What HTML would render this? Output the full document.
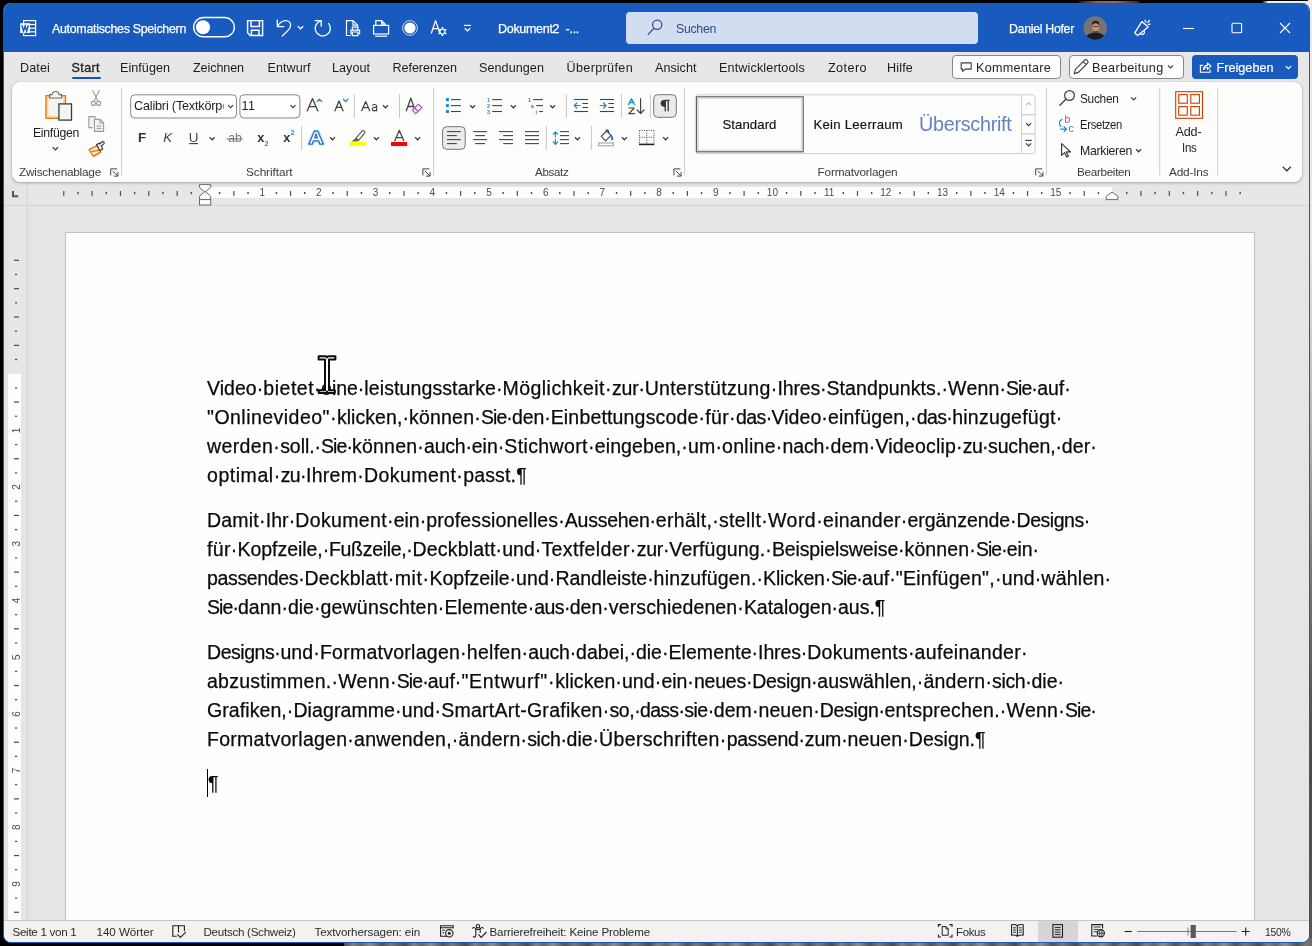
<!DOCTYPE html>
<html lang="de"><head><meta charset="utf-8"><title>Dokument2 - Word</title>
<style>
*{box-sizing:border-box}
html,body{margin:0;padding:0}
body{width:1312px;height:946px;overflow:hidden;position:relative;background:#000;font-family:"Liberation Sans",sans-serif;font-size:13.5px;color:#262626}
.abs,.t,.d,svg.i{position:absolute}
.t{white-space:nowrap;line-height:20px;height:20px;transform-origin:0 50%}
  .d{transform-origin:0 50%;-webkit-text-stroke:0.25px #0a0a0a;white-space:nowrap;line-height:30px;height:30px;font-size:19.5px;color:#0a0a0a}
/* desktop background pieces */
#bgTopA{left:1079px;top:1px;width:60px;height:3px;background:linear-gradient(90deg,#2a1a10,#8a6244 30%,#9a7050 60%,#3a2618)}
#bgTopB{left:1262px;top:1px;width:50px;height:6px;background:linear-gradient(90deg,#000,#efebe7 6px)}
#bgRight{left:1308px;top:0;width:4px;height:946px;background:linear-gradient(180deg,#efebe7 0,#e9e6e3 25%,#b9b6b3 45%,#7c7a78 60%,#4a4846 80%,#5a5654 100%)}
#bgBot{left:344px;top:938px;width:968px;height:8px;background:repeating-linear-gradient(90deg,#4d4a47 0,#86817b 9px,#6a625a 17px,#938d86 26px,#55514d 38px,#7e776f 47px,#4d4a47 61px)}
/* window */
#win{left:3px;top:3px;width:1307px;height:940px;border-radius:8px;background:#e8e7e7;overflow:hidden;border:1px solid #185abd;border-top:none}
#title{left:0;top:0;width:1307px;height:49px;background:#185abd}
#search{left:622px;top:9px;width:352px;height:32px;border-radius:4px;background:#d2ddf2}
#tabs{left:0;top:49px;width:1307px;height:131px;background:#e8e7e7}
#startul{left:67.5px;top:74px;width:29px;height:2px;background:#1a4fb4;border-radius:1px}
.btn{border:1px solid #8a8886;border-radius:4px;background:#fdfdfd}
#bKom{left:948px;top:52px;width:109px;height:24px}
#bBea{left:1065px;top:52px;width:115px;height:24px}
#bFre{left:1188px;top:52px;width:105.5px;height:24px;border-radius:4px;background:#185abd}
#ribbon{left:8px;top:79px;width:1290px;height:100px;border-radius:8px;background:#fdfdfc;box-shadow:0 1px 3px rgba(0,0,0,.28),0 0 1px rgba(0,0,0,.18)}
.gs{width:1px;background:#d2d0ce;top:88px;height:86px}
.ss{width:1px;background:#c8c6c4}
.box{border:1px solid #8a8886;border-radius:4px;background:#fff}
.pressed{border:1px solid #8a8886;border-radius:4px;background:#e6e6e6}
/* rulers + doc area */
#docarea{left:0;top:180px;width:1307px;height:738px;background:#e5e5e5}
#hrgray{left:23px;top:183px;width:1283px;height:16px;background:#e7e7e7}
#hrwhite{left:202px;top:183.5px;width:906px;height:11.5px;background:#fefefe}
#hrline{left:0;top:202px;width:1307px;height:1px;background:#d4d4d4}
#vrline{left:23px;top:179px;width:1px;height:739px;background:#d6d6d6}
#vrgray{left:4px;top:203px;width:13px;height:715px;background:#e7e7e7}
#vrwhite{left:4px;top:371px;width:13px;height:547px;background:#fefefe}
#page{left:61px;top:229px;width:1190px;height:700px;background:#fefefd;border:1px solid #c4c2c1}
#status{left:0;top:917px;width:1307px;height:22px;background:#f3f2f1;border-top:1px solid #c9c7c6}
#selview{left:1034px;top:918px;width:40px;height:21px;background:#d8d6d5}
#caret{left:207px;top:769px;width:1px;height:28px;background:#000}
</style></head>
<body>
<div class="abs" id="bgTopA"></div><div class="abs" id="bgTopB"></div><div class="abs" id="bgRight"></div><div class="abs" id="bgBot"></div>
<div class="abs" id="win">
  <div class="abs" id="title"></div>
  <div class="abs" id="search"></div>
  <div class="abs" id="tabs"></div>
  <div class="abs" id="startul"></div>
  <div class="abs btn" id="bKom"></div><div class="abs btn" id="bBea"></div><div class="abs" id="bFre"></div>
  <div class="abs" id="docarea"></div>
  <div class="abs" id="hrgray"></div><div class="abs" id="hrwhite"></div><div class="abs" id="hrline"></div>
  <div class="abs" id="vrline"></div><div class="abs" id="vrgray"></div><div class="abs" id="vrwhite"></div>
  <div class="abs" id="page"></div>
  <div class="abs" id="ribbon"></div>
  <div class="abs" id="status"></div>
  <div class="abs" id="selview"></div>
</div>
<!-- everything below is positioned in page coordinates -->
<div class="abs" id="overlay" style="left:0;top:0;width:1312px;height:946px;overflow:hidden;will-change:transform">
<svg class="i" style="left:0;top:0" width="1312" height="946" viewBox="0 0 1312 946">
<rect x="190.63" y="191.90" width="1.40" height="2.20" rx="0" fill="#4a4a4a" stroke="none" stroke-width="0"/>
<rect x="176.55" y="191.00" width="1.20" height="4.80" rx="0" fill="#4a4a4a" stroke="none" stroke-width="0"/>
<rect x="162.28" y="191.90" width="1.40" height="2.20" rx="0" fill="#4a4a4a" stroke="none" stroke-width="0"/>
<rect x="148.21" y="191.00" width="1.20" height="4.80" rx="0" fill="#4a4a4a" stroke="none" stroke-width="0"/>
<rect x="133.93" y="191.90" width="1.40" height="2.20" rx="0" fill="#4a4a4a" stroke="none" stroke-width="0"/>
<rect x="119.86" y="191.00" width="1.20" height="4.80" rx="0" fill="#4a4a4a" stroke="none" stroke-width="0"/>
<rect x="105.59" y="191.90" width="1.40" height="2.20" rx="0" fill="#4a4a4a" stroke="none" stroke-width="0"/>
<rect x="91.51" y="191.00" width="1.20" height="4.80" rx="0" fill="#4a4a4a" stroke="none" stroke-width="0"/>
<rect x="77.24" y="191.90" width="1.40" height="2.20" rx="0" fill="#4a4a4a" stroke="none" stroke-width="0"/>
<rect x="63.17" y="191.00" width="1.20" height="4.80" rx="0" fill="#4a4a4a" stroke="none" stroke-width="0"/>
<rect x="218.97" y="191.90" width="1.40" height="2.20" rx="0" fill="#4a4a4a" stroke="none" stroke-width="0"/>
<rect x="233.25" y="191.00" width="1.20" height="4.80" rx="0" fill="#4a4a4a" stroke="none" stroke-width="0"/>
<rect x="247.32" y="191.90" width="1.40" height="2.20" rx="0" fill="#4a4a4a" stroke="none" stroke-width="0"/>
<rect x="275.67" y="191.90" width="1.40" height="2.20" rx="0" fill="#4a4a4a" stroke="none" stroke-width="0"/>
<rect x="289.94" y="191.00" width="1.20" height="4.80" rx="0" fill="#4a4a4a" stroke="none" stroke-width="0"/>
<rect x="304.01" y="191.90" width="1.40" height="2.20" rx="0" fill="#4a4a4a" stroke="none" stroke-width="0"/>
<rect x="332.36" y="191.90" width="1.40" height="2.20" rx="0" fill="#4a4a4a" stroke="none" stroke-width="0"/>
<rect x="346.63" y="191.00" width="1.20" height="4.80" rx="0" fill="#4a4a4a" stroke="none" stroke-width="0"/>
<rect x="360.71" y="191.90" width="1.40" height="2.20" rx="0" fill="#4a4a4a" stroke="none" stroke-width="0"/>
<rect x="389.05" y="191.90" width="1.40" height="2.20" rx="0" fill="#4a4a4a" stroke="none" stroke-width="0"/>
<rect x="403.33" y="191.00" width="1.20" height="4.80" rx="0" fill="#4a4a4a" stroke="none" stroke-width="0"/>
<rect x="417.40" y="191.90" width="1.40" height="2.20" rx="0" fill="#4a4a4a" stroke="none" stroke-width="0"/>
<rect x="445.75" y="191.90" width="1.40" height="2.20" rx="0" fill="#4a4a4a" stroke="none" stroke-width="0"/>
<rect x="460.02" y="191.00" width="1.20" height="4.80" rx="0" fill="#4a4a4a" stroke="none" stroke-width="0"/>
<rect x="474.09" y="191.90" width="1.40" height="2.20" rx="0" fill="#4a4a4a" stroke="none" stroke-width="0"/>
<rect x="502.44" y="191.90" width="1.40" height="2.20" rx="0" fill="#4a4a4a" stroke="none" stroke-width="0"/>
<rect x="516.71" y="191.00" width="1.20" height="4.80" rx="0" fill="#4a4a4a" stroke="none" stroke-width="0"/>
<rect x="530.78" y="191.90" width="1.40" height="2.20" rx="0" fill="#4a4a4a" stroke="none" stroke-width="0"/>
<rect x="559.13" y="191.90" width="1.40" height="2.20" rx="0" fill="#4a4a4a" stroke="none" stroke-width="0"/>
<rect x="573.40" y="191.00" width="1.20" height="4.80" rx="0" fill="#4a4a4a" stroke="none" stroke-width="0"/>
<rect x="587.48" y="191.90" width="1.40" height="2.20" rx="0" fill="#4a4a4a" stroke="none" stroke-width="0"/>
<rect x="615.82" y="191.90" width="1.40" height="2.20" rx="0" fill="#4a4a4a" stroke="none" stroke-width="0"/>
<rect x="630.10" y="191.00" width="1.20" height="4.80" rx="0" fill="#4a4a4a" stroke="none" stroke-width="0"/>
<rect x="644.17" y="191.90" width="1.40" height="2.20" rx="0" fill="#4a4a4a" stroke="none" stroke-width="0"/>
<rect x="672.52" y="191.90" width="1.40" height="2.20" rx="0" fill="#4a4a4a" stroke="none" stroke-width="0"/>
<rect x="686.79" y="191.00" width="1.20" height="4.80" rx="0" fill="#4a4a4a" stroke="none" stroke-width="0"/>
<rect x="700.86" y="191.90" width="1.40" height="2.20" rx="0" fill="#4a4a4a" stroke="none" stroke-width="0"/>
<rect x="729.21" y="191.90" width="1.40" height="2.20" rx="0" fill="#4a4a4a" stroke="none" stroke-width="0"/>
<rect x="743.48" y="191.00" width="1.20" height="4.80" rx="0" fill="#4a4a4a" stroke="none" stroke-width="0"/>
<rect x="757.56" y="191.90" width="1.40" height="2.20" rx="0" fill="#4a4a4a" stroke="none" stroke-width="0"/>
<rect x="785.90" y="191.90" width="1.40" height="2.20" rx="0" fill="#4a4a4a" stroke="none" stroke-width="0"/>
<rect x="800.18" y="191.00" width="1.20" height="4.80" rx="0" fill="#4a4a4a" stroke="none" stroke-width="0"/>
<rect x="814.25" y="191.90" width="1.40" height="2.20" rx="0" fill="#4a4a4a" stroke="none" stroke-width="0"/>
<rect x="842.60" y="191.90" width="1.40" height="2.20" rx="0" fill="#4a4a4a" stroke="none" stroke-width="0"/>
<rect x="856.87" y="191.00" width="1.20" height="4.80" rx="0" fill="#4a4a4a" stroke="none" stroke-width="0"/>
<rect x="870.94" y="191.90" width="1.40" height="2.20" rx="0" fill="#4a4a4a" stroke="none" stroke-width="0"/>
<rect x="899.29" y="191.90" width="1.40" height="2.20" rx="0" fill="#4a4a4a" stroke="none" stroke-width="0"/>
<rect x="913.56" y="191.00" width="1.20" height="4.80" rx="0" fill="#4a4a4a" stroke="none" stroke-width="0"/>
<rect x="927.64" y="191.90" width="1.40" height="2.20" rx="0" fill="#4a4a4a" stroke="none" stroke-width="0"/>
<rect x="955.98" y="191.90" width="1.40" height="2.20" rx="0" fill="#4a4a4a" stroke="none" stroke-width="0"/>
<rect x="970.26" y="191.00" width="1.20" height="4.80" rx="0" fill="#4a4a4a" stroke="none" stroke-width="0"/>
<rect x="984.33" y="191.90" width="1.40" height="2.20" rx="0" fill="#4a4a4a" stroke="none" stroke-width="0"/>
<rect x="1012.68" y="191.90" width="1.40" height="2.20" rx="0" fill="#4a4a4a" stroke="none" stroke-width="0"/>
<rect x="1026.95" y="191.00" width="1.20" height="4.80" rx="0" fill="#4a4a4a" stroke="none" stroke-width="0"/>
<rect x="1041.02" y="191.90" width="1.40" height="2.20" rx="0" fill="#4a4a4a" stroke="none" stroke-width="0"/>
<rect x="1069.37" y="191.90" width="1.40" height="2.20" rx="0" fill="#4a4a4a" stroke="none" stroke-width="0"/>
<rect x="1083.64" y="191.00" width="1.20" height="4.80" rx="0" fill="#4a4a4a" stroke="none" stroke-width="0"/>
<rect x="1097.71" y="191.90" width="1.40" height="2.20" rx="0" fill="#4a4a4a" stroke="none" stroke-width="0"/>
<rect x="1126.06" y="191.90" width="1.40" height="2.20" rx="0" fill="#4a4a4a" stroke="none" stroke-width="0"/>
<rect x="1140.33" y="191.00" width="1.20" height="4.80" rx="0" fill="#4a4a4a" stroke="none" stroke-width="0"/>
<rect x="1154.41" y="191.90" width="1.40" height="2.20" rx="0" fill="#4a4a4a" stroke="none" stroke-width="0"/>
<rect x="1168.68" y="191.00" width="1.20" height="4.80" rx="0" fill="#4a4a4a" stroke="none" stroke-width="0"/>
<rect x="1182.75" y="191.90" width="1.40" height="2.20" rx="0" fill="#4a4a4a" stroke="none" stroke-width="0"/>
<rect x="1197.03" y="191.00" width="1.20" height="4.80" rx="0" fill="#4a4a4a" stroke="none" stroke-width="0"/>
<rect x="1211.10" y="191.90" width="1.40" height="2.20" rx="0" fill="#4a4a4a" stroke="none" stroke-width="0"/>
<rect x="1225.37" y="191.00" width="1.20" height="4.80" rx="0" fill="#4a4a4a" stroke="none" stroke-width="0"/>
<rect x="1239.45" y="191.90" width="1.40" height="2.20" rx="0" fill="#4a4a4a" stroke="none" stroke-width="0"/>
<g font-family="Liberation Sans, sans-serif" font-size="10" fill="#4a4a4a" text-anchor="middle"><text x="262.19" y="196.1">1</text><text x="318.89" y="196.1">2</text><text x="375.58" y="196.1">3</text><text x="432.27" y="196.1">4</text><text x="488.96" y="196.1">5</text><text x="545.66" y="196.1">6</text><text x="602.35" y="196.1">7</text><text x="659.04" y="196.1">8</text><text x="715.74" y="196.1">9</text><text x="772.43" y="196.1">10</text><text x="829.12" y="196.1">11</text><text x="885.82" y="196.1">12</text><text x="942.51" y="196.1">13</text><text x="999.20" y="196.1">14</text><text x="1055.89" y="196.1">15</text></g>
<rect x="15.00" y="358.93" width="2.20" height="1.20" rx="0" fill="#4a4a4a" stroke="none" stroke-width="0"/>
<rect x="14.00" y="344.75" width="5.00" height="1.20" rx="0" fill="#4a4a4a" stroke="none" stroke-width="0"/>
<rect x="15.00" y="330.58" width="2.20" height="1.20" rx="0" fill="#4a4a4a" stroke="none" stroke-width="0"/>
<rect x="14.00" y="316.41" width="5.00" height="1.20" rx="0" fill="#4a4a4a" stroke="none" stroke-width="0"/>
<rect x="15.00" y="302.23" width="2.20" height="1.20" rx="0" fill="#4a4a4a" stroke="none" stroke-width="0"/>
<rect x="14.00" y="288.06" width="5.00" height="1.20" rx="0" fill="#4a4a4a" stroke="none" stroke-width="0"/>
<rect x="15.00" y="273.89" width="2.20" height="1.20" rx="0" fill="#4a4a4a" stroke="none" stroke-width="0"/>
<rect x="14.00" y="259.71" width="5.00" height="1.20" rx="0" fill="#4a4a4a" stroke="none" stroke-width="0"/>
<rect x="15.00" y="387.27" width="2.20" height="1.20" rx="0" fill="#4a4a4a" stroke="none" stroke-width="0"/>
<rect x="14.00" y="401.45" width="5.00" height="1.20" rx="0" fill="#4a4a4a" stroke="none" stroke-width="0"/>
<rect x="15.00" y="415.62" width="2.20" height="1.20" rx="0" fill="#4a4a4a" stroke="none" stroke-width="0"/>
<rect x="15.00" y="443.97" width="2.20" height="1.20" rx="0" fill="#4a4a4a" stroke="none" stroke-width="0"/>
<rect x="14.00" y="458.14" width="5.00" height="1.20" rx="0" fill="#4a4a4a" stroke="none" stroke-width="0"/>
<rect x="15.00" y="472.31" width="2.20" height="1.20" rx="0" fill="#4a4a4a" stroke="none" stroke-width="0"/>
<rect x="15.00" y="500.66" width="2.20" height="1.20" rx="0" fill="#4a4a4a" stroke="none" stroke-width="0"/>
<rect x="14.00" y="514.83" width="5.00" height="1.20" rx="0" fill="#4a4a4a" stroke="none" stroke-width="0"/>
<rect x="15.00" y="529.01" width="2.20" height="1.20" rx="0" fill="#4a4a4a" stroke="none" stroke-width="0"/>
<rect x="15.00" y="557.35" width="2.20" height="1.20" rx="0" fill="#4a4a4a" stroke="none" stroke-width="0"/>
<rect x="14.00" y="571.53" width="5.00" height="1.20" rx="0" fill="#4a4a4a" stroke="none" stroke-width="0"/>
<rect x="15.00" y="585.70" width="2.20" height="1.20" rx="0" fill="#4a4a4a" stroke="none" stroke-width="0"/>
<rect x="15.00" y="614.05" width="2.20" height="1.20" rx="0" fill="#4a4a4a" stroke="none" stroke-width="0"/>
<rect x="14.00" y="628.22" width="5.00" height="1.20" rx="0" fill="#4a4a4a" stroke="none" stroke-width="0"/>
<rect x="15.00" y="642.39" width="2.20" height="1.20" rx="0" fill="#4a4a4a" stroke="none" stroke-width="0"/>
<rect x="15.00" y="670.74" width="2.20" height="1.20" rx="0" fill="#4a4a4a" stroke="none" stroke-width="0"/>
<rect x="14.00" y="684.91" width="5.00" height="1.20" rx="0" fill="#4a4a4a" stroke="none" stroke-width="0"/>
<rect x="15.00" y="699.08" width="2.20" height="1.20" rx="0" fill="#4a4a4a" stroke="none" stroke-width="0"/>
<rect x="15.00" y="727.43" width="2.20" height="1.20" rx="0" fill="#4a4a4a" stroke="none" stroke-width="0"/>
<rect x="14.00" y="741.60" width="5.00" height="1.20" rx="0" fill="#4a4a4a" stroke="none" stroke-width="0"/>
<rect x="15.00" y="755.78" width="2.20" height="1.20" rx="0" fill="#4a4a4a" stroke="none" stroke-width="0"/>
<rect x="15.00" y="784.12" width="2.20" height="1.20" rx="0" fill="#4a4a4a" stroke="none" stroke-width="0"/>
<rect x="14.00" y="798.30" width="5.00" height="1.20" rx="0" fill="#4a4a4a" stroke="none" stroke-width="0"/>
<rect x="15.00" y="812.47" width="2.20" height="1.20" rx="0" fill="#4a4a4a" stroke="none" stroke-width="0"/>
<rect x="15.00" y="840.82" width="2.20" height="1.20" rx="0" fill="#4a4a4a" stroke="none" stroke-width="0"/>
<rect x="14.00" y="854.99" width="5.00" height="1.20" rx="0" fill="#4a4a4a" stroke="none" stroke-width="0"/>
<rect x="15.00" y="869.16" width="2.20" height="1.20" rx="0" fill="#4a4a4a" stroke="none" stroke-width="0"/>
<rect x="15.00" y="897.51" width="2.20" height="1.20" rx="0" fill="#4a4a4a" stroke="none" stroke-width="0"/>
<rect x="14.00" y="911.68" width="5.00" height="1.20" rx="0" fill="#4a4a4a" stroke="none" stroke-width="0"/>
<g font-family="Liberation Sans, sans-serif" font-size="10" fill="#4a4a4a" text-anchor="middle"><text transform="translate(19.6 430.39) rotate(-90)">1</text><text transform="translate(19.6 487.09) rotate(-90)">2</text><text transform="translate(19.6 543.78) rotate(-90)">3</text><text transform="translate(19.6 600.47) rotate(-90)">4</text><text transform="translate(19.6 657.16) rotate(-90)">5</text><text transform="translate(19.6 713.86) rotate(-90)">6</text><text transform="translate(19.6 770.55) rotate(-90)">7</text><text transform="translate(19.6 827.24) rotate(-90)">8</text><text transform="translate(19.6 883.94) rotate(-90)">9</text></g>
<path d="M13 191V196.2H18.2" fill="none" stroke="#555" stroke-width="2" />
<path d="M199.5 184.6H210.7V187.4L205.1 192.2L199.5 187.4Z" fill="#fff" stroke="#6b6b6b" stroke-width="1" />
<path d="M205.1 191.4L210.7 196.2V199.6H199.5V196.2Z" fill="#fff" stroke="#6b6b6b" stroke-width="1" />
<rect x="199.50" y="199.60" width="11.20" height="5.40" rx="0" fill="#fff" stroke="#6b6b6b" stroke-width="1"/>
<path d="M1112 192.2L1117.8 196.2V199.6H1106.2V196.2Z" fill="#fff" stroke="#6b6b6b" stroke-width="1" />
</svg>
<svg class="i" style="left:0;top:0" width="1312" height="946" viewBox="0 0 1312 946">
<rect x="23.60" y="20.60" width="12.00" height="15.00" rx="0" fill="none" stroke="#fff" stroke-width="1.2"/>
<path d="M30.00 24.50L35.00 24.50" stroke="#fff" stroke-width="1.2" stroke-linecap="butt" fill="none"/><path d="M30.00 28.20L35.00 28.20" stroke="#fff" stroke-width="1.2" stroke-linecap="butt" fill="none"/><path d="M30.00 31.80L35.00 31.80" stroke="#fff" stroke-width="1.2" stroke-linecap="butt" fill="none"/>
<rect x="20.20" y="23.20" width="9.80" height="9.80" rx="0" fill="#fff" stroke="none" stroke-width="0"/>
<path d="M21.9 25.3L23.5 31L25.1 26.2L26.7 31L28.3 25.3" fill="none" stroke="#185abd" stroke-width="1.5" stroke-linejoin="miter"/>
<rect x="193.60" y="17.60" width="40.80" height="19.20" rx="9.6" fill="none" stroke="#fff" stroke-width="1.5"/>
<circle cx="203.00" cy="27.20" r="7.00" fill="#fff" stroke="none" stroke-width="0"/>
<path d="M247.6 20.6H262.6V35.4H250.2L247.6 32.8Z M251 20.6V26.4H259.4V20.6 M251.4 35.4V30.2H259V35.4" fill="none" stroke="#fff" stroke-width="1.45" stroke-linejoin="miter"/>
<path d="M277.3 20.2V26.6H283.8 M277.6 26.3C279.5 22.8 282.5 20.6 285.8 20.6C288.8 20.6 290.6 22.8 290.6 25.2C290.6 27.4 289.5 28.9 288 30.4L282.3 36" fill="none" stroke="#fff" stroke-width="1.3" stroke-linecap="round" stroke-linejoin="round"/>
<path d="M297.80 26.23L300.50 28.77L303.20 26.23" fill="none" stroke="#fff" stroke-width="1.3" stroke-linecap="butt" stroke-linejoin="miter"/>
<path d="M315.2 20.6H321.2V26.2" fill="none" stroke="#fff" stroke-width="1.3" stroke-linecap="round" stroke-linejoin="round"/>
<path d="M321 20.9A7.6 7.6 0 1 0 328.6 23.4" fill="none" stroke="#fff" stroke-width="1.3" stroke-linecap="round"/>
<path d="M350.6 35.5H346.5V20.6H353L357.6 25.2V27.2 M353 20.6V25.2H357.6" fill="none" stroke="#fff" stroke-width="1.2" stroke-linejoin="miter"/>
<path d="M352.4 30.2V27.2H357.8V30.2 M350.8 33.6V30.2H359.6V33.6H357.8 M352.4 33.6H350.8 M352.4 32V35.6H357.8V32Z" fill="none" stroke="#fff" stroke-width="1.2" />
<rect x="373.60" y="25.40" width="15.00" height="8.60" rx="0" fill="none" stroke="#fff" stroke-width="1.2"/>
<path d="M375.8 25V20.6H381.6L385.2 24.2V25 M381.6 20.6V24.2H385.2" fill="none" stroke="#fff" stroke-width="1.2" />
<path d="M375.20 36.20L387.20 36.20" stroke="#fff" stroke-width="1.2" stroke-linecap="butt" fill="none"/>
<circle cx="410.00" cy="28.00" r="5.60" fill="#fff" stroke="none" stroke-width="0"/><circle cx="410.00" cy="28.00" r="7.40" fill="none" stroke="rgba(255,255,255,.85)" stroke-width="0.9"/>
<path d="M431.4 33L435.6 20.6L439.8 33 M432.9 28.6H438.3" fill="none" stroke="#fff" stroke-width="1.25" stroke-linejoin="round" stroke-linecap="round"/>
<circle cx="442.40" cy="31.60" r="2.50" fill="none" stroke="#fff" stroke-width="1.2"/>
<path d="M442.4 27.1V28.6 M442.4 34.6V36.1 M438.5 29.35L439.8 30.1 M445 33.1L446.3 33.85 M438.5 33.85L439.8 33.1 M445 30.1L446.3 29.35" fill="none" stroke="#fff" stroke-width="1.6" />
<path d="M464.00 25.40L471.00 25.40" stroke="#fff" stroke-width="1.2" stroke-linecap="butt" fill="none"/><path d="M464.80 28.33L467.50 30.88L470.20 28.33" fill="none" stroke="#fff" stroke-width="1.3" stroke-linecap="butt" stroke-linejoin="miter"/>
<circle cx="657.20" cy="24.80" r="4.60" fill="none" stroke="#2a4b8d" stroke-width="1.2"/><path d="M653.80 28.40L648.20 34.40" stroke="#2a4b8d" stroke-width="1.3" stroke-linecap="round" fill="none"/>
<defs><clipPath id="av"><circle cx="1095.2" cy="28" r="11.8"/></clipPath></defs>
<g clip-path="url(#av)"><rect x="1083" y="16" width="25" height="25" fill="#767472"/><path d="M1084 41C1085 35 1090 32.5 1095.5 32.5C1101 32.5 1105.5 35 1107 41Z" fill="#1d1c1c"/><ellipse cx="1095.6" cy="27.2" rx="3.6" ry="4.6" fill="#c98f6e"/><path d="M1091.8 26C1091.6 22.6 1093.2 20.8 1095.6 20.8C1098.2 20.8 1099.8 22.6 1099.4 26C1098.8 24 1097.6 23.2 1095.6 23.2C1093.6 23.2 1092.4 24 1091.8 26Z" fill="#2a1d18"/><path d="M1093.2 30.2C1094 31.6 1097.2 31.6 1098 30.2L1097.4 32.4H1093.8Z" fill="#5a3a2c"/><rect x="1092.6" y="26" width="6" height="1" fill="#3a2a24" opacity=".7"/></g>
<path d="M1141.8 21.6L1148.2 27L1137.6 35.6L1134.8 32.8Z M1140.4 33.6A2.1 2.1 0 0 0 1144 30.8" fill="none" stroke="#fff" stroke-width="1.3" stroke-linejoin="round"/>
<path d="M1145 20.2L1145.8 22.1 M1147.8 22.5L1149.6 20.3 M1148.2 24.5L1150 24.2" fill="none" stroke="#fff" stroke-width="1.2" stroke-linecap="round"/>
<path d="M1183.00 28.50L1194.00 28.50" stroke="#fff" stroke-width="1.1" stroke-linecap="butt" fill="none"/>
<rect x="1232.00" y="23.20" width="9.60" height="9.60" rx="1" fill="none" stroke="#fff" stroke-width="1.1"/>
<path d="M1280 23L1290 33M1290 23L1280 33" fill="none" stroke="#fff" stroke-width="1.1" />
<path d="M961.2 62.9H971.2V69.1H965.2L962.6 71.3V69.1H961.2Z" fill="none" stroke="#3b3b3b" stroke-width="1.1" stroke-linejoin="round"/>
<path d="M1074.2 73.6L1075.4 69.4L1084.6 60.2A1.7 1.7 0 0 1 1087 60.2L1087.6 60.8A1.7 1.7 0 0 1 1087.6 63.2L1078.4 72.4Z M1083.2 61.6L1086.2 64.6" fill="none" stroke="#3b3b3b" stroke-width="1.1" stroke-linejoin="round"/>
<path d="M1167.98 65.32L1170.50 67.88L1173.02 65.32" fill="none" stroke="#3b3b3b" stroke-width="1.2" stroke-linecap="butt" stroke-linejoin="miter"/>
<path d="M1203 65.4H1200.4V72.2H1210.2V69.6" fill="none" stroke="#fff" stroke-width="1.1" stroke-linejoin="round"/>
<path d="M1203.4 69.6C1203.6 66.8 1205.2 65.4 1207.4 65.4V63L1211 66.2L1207.4 69.4V67.2C1205.8 67.2 1204.6 67.8 1203.4 69.6Z" fill="none" stroke="#fff" stroke-width="1.1" stroke-linejoin="round"/>
<path d="M1285.80 66.12L1288.50 68.68L1291.20 66.12" fill="none" stroke="#fff" stroke-width="1.3" stroke-linecap="butt" stroke-linejoin="miter"/>
<rect x="45.90" y="95.70" width="19.60" height="22.60" rx="0" fill="#fbd9a0" stroke="#e8760a" stroke-width="1.3"/>
<rect x="48.40" y="98.20" width="14.60" height="17.60" rx="0" fill="#f4f4f7" stroke="none" stroke-width="0"/>
<path d="M49.6 98V94.6H52.2C52.2 90.4 59 90.4 59 94.6H61.6V98Z" fill="#f7f7f7" stroke="#6a6a6a" stroke-width="1.1" stroke-linejoin="round"/>
<rect x="58.90" y="103.90" width="12.60" height="16.20" rx="0" fill="#f5f5f8" stroke="#3d3d3d" stroke-width="1.3"/>
<path d="M52.70 147.32L55.40 149.88L58.10 147.32" fill="none" stroke="#3b3b3b" stroke-width="1.3" stroke-linecap="butt" stroke-linejoin="miter"/>
<path d="M92.8 90.6L97.6 100.6 M99.2 90.6L94.4 100.6" fill="none" stroke="#9b9b9b" stroke-width="1.1" stroke-linecap="round"/>
<circle cx="93.40" cy="103.40" r="2.00" fill="none" stroke="#9b9b9b" stroke-width="1.1"/><circle cx="98.60" cy="103.40" r="2.00" fill="none" stroke="#9b9b9b" stroke-width="1.1"/>
<path d="M94.4 100.6L94 101.6 M97.6 100.6L98 101.6" fill="none" stroke="#9b9b9b" stroke-width="1.1" />
<path d="M92.6 127.6H88.8V116.6H94.6L96 118" fill="#f3f3f3" stroke="#9b9b9b" stroke-width="1.1" stroke-linejoin="round"/>
<path d="M94.4 119.4H100L103.6 123V131.4H94.4Z M100 119.4V123H103.6" fill="#f3f3f3" stroke="#9b9b9b" stroke-width="1.1" stroke-linejoin="round"/>
<path d="M96.60 126.00L101.40 126.00" stroke="#9b9b9b" stroke-width="1" stroke-linecap="butt" fill="none"/><path d="M96.60 128.40L101.40 128.40" stroke="#9b9b9b" stroke-width="1" stroke-linecap="butt" fill="none"/>
<path d="M89 149.6L97.4 145.4L101 152.2L93.4 156.4Z" fill="#fbe3c4" stroke="#e8760a" stroke-width="1.2" stroke-linejoin="round"/>
<path d="M91.4 151.6L99.6 150.2 M93.4 156.2L99 152.6" fill="none" stroke="#e8760a" stroke-width="1.1" />
<path d="M96.6 144.6L99.6 143L102.8 149L99.8 150.6Z" fill="#fdfdfd" stroke="#3d3d3d" stroke-width="1.2" stroke-linejoin="round"/>
<path d="M99.4 144.2L102.2 141.8A1.3 1.3 0 0 1 104 143.6L101.4 146.2" fill="#fdfdfd" stroke="#3d3d3d" stroke-width="1.2" stroke-linejoin="round"/>
<path d="M110.70 175.40V168.90H117.20" fill="none" stroke="#444" stroke-width="1" /><path d="M112.70 170.90L117.70 175.90M117.90 172.00V176.10H113.80" fill="none" stroke="#444" stroke-width="1" />
<rect x="130.70" y="94.80" width="105.80" height="23.20" rx="4" fill="#fff" stroke="#868686" stroke-width="1"/>
<rect x="239.90" y="94.80" width="60.00" height="23.20" rx="4" fill="#fff" stroke="#868686" stroke-width="1"/>
<path d="M228.08 105.12L230.60 107.68L233.12 105.12" fill="none" stroke="#3b3b3b" stroke-width="1.2" stroke-linecap="butt" stroke-linejoin="miter"/><path d="M290.48 105.12L293.00 107.68L295.52 105.12" fill="none" stroke="#3b3b3b" stroke-width="1.2" stroke-linecap="butt" stroke-linejoin="miter"/>
<path d="M307.3 110.8L312.5 98.5L317.7 110.8 M309.1 106.6H315.9" fill="none" stroke="#444" stroke-width="1.35" stroke-linejoin="round" stroke-linecap="round"/>
<path d="M317 101.6L319.4 99.2L321.8 101.6" fill="none" stroke="#1e8ad6" stroke-width="1.3" stroke-linecap="round" stroke-linejoin="round"/>
<path d="M335 110.8L339 101L343 110.8 M336.5 107.3H341.5" fill="none" stroke="#444" stroke-width="1.3" stroke-linejoin="round" stroke-linecap="round"/>
<path d="M343.3 99.3L345.6 101.6L347.9 99.3" fill="none" stroke="#1e8ad6" stroke-width="1.3" stroke-linecap="round" stroke-linejoin="round"/>
<path d="M354.40 94.20L354.40 117.80" stroke="#c8c6c4" stroke-width="1" stroke-linecap="butt" fill="none"/>
<path d="M361.7 110.8L365.7 101.5L369.7 110.8 M363.2 107.5H368.2" fill="none" stroke="#444" stroke-width="1.25" stroke-linejoin="round" stroke-linecap="round"/>
<path d="M372.6 105.2C373.4 104.4 376.6 103.8 376.6 106.2V110.8 M376.6 107.2C374.4 107.2 372.3 107.5 372.3 109.2C372.3 111.4 375.8 111.2 376.6 109.4" fill="none" stroke="#444" stroke-width="1.2" stroke-linecap="round"/>
<path d="M382.98 105.22L385.50 107.78L388.02 105.22" fill="none" stroke="#3b3b3b" stroke-width="1.2" stroke-linecap="butt" stroke-linejoin="miter"/>
<path d="M399.50 94.20L399.50 117.80" stroke="#c8c6c4" stroke-width="1" stroke-linecap="butt" fill="none"/>
<path d="M406.3 110.8L410.8 98.2L415.3 110.8 M407.9 106.5H413.7" fill="none" stroke="#444" stroke-width="1.3" stroke-linejoin="round" stroke-linecap="round"/>
<path d="M412.4 110.2L418.4 104.2L421.8 107.6L415.8 113.6Z M414.6 108L418 111.4" fill="#fdfdfd" stroke="#b146c2" stroke-width="1.2" stroke-linejoin="round"/>
<path d="M189.20 143.60L198.00 143.60" stroke="#3b3b3b" stroke-width="1.1" stroke-linecap="butt" fill="none"/>
<path d="M209.68 137.22L212.20 139.78L214.72 137.22" fill="none" stroke="#3b3b3b" stroke-width="1.2" stroke-linecap="butt" stroke-linejoin="miter"/>
<path d="M226.60 139.00L242.80 139.00" stroke="#6e6e6e" stroke-width="1" stroke-linecap="butt" fill="none"/>
<path d="M301.60 126.00L301.60 149.80" stroke="#c8c6c4" stroke-width="1" stroke-linecap="butt" fill="none"/>
<path d="M308.9 144L314.5 131H317.7L323.3 144H319.9L318.7 140.8H313.5L312.3 144Z" fill="none" stroke="rgba(70,160,240,.30)" stroke-width="3.2" stroke-linejoin="round"/>
<path d="M308.9 144L314.5 131H317.7L323.3 144H319.9L318.7 140.8H313.5L312.3 144Z M314.7 137.9H317.5L316.1 133.9Z" fill="#fdfdfd" stroke="#1b6ec8" stroke-width="1.25" stroke-linejoin="round" fill-rule="evenodd"/>
<path d="M329.98 137.22L332.50 139.78L335.02 137.22" fill="none" stroke="#3b3b3b" stroke-width="1.2" stroke-linecap="butt" stroke-linejoin="miter"/>
<path d="M356 138.2L362 131.2A1.6 1.6 0 0 1 364.4 133.4L358.6 140.4Z" fill="#fdfdfd" stroke="#5f5f5f" stroke-width="1.2" stroke-linejoin="round"/>
<path d="M356 138.2L358.6 140.4L356.6 141L352.6 141Z" fill="#6a6a6a" stroke="#5f5f5f" stroke-width="1" stroke-linejoin="round"/>
<rect x="350.00" y="142.00" width="16.20" height="4.00" rx="0" fill="#ffff00" stroke="none" stroke-width="0"/>
<path d="M373.88 137.22L376.40 139.78L378.92 137.22" fill="none" stroke="#3b3b3b" stroke-width="1.2" stroke-linecap="butt" stroke-linejoin="miter"/>
<path d="M394.8 140.8L399.3 130.4L403.8 140.8 M396.2 137.7H402.4" fill="none" stroke="#444" stroke-width="1.3" stroke-linejoin="round" stroke-linecap="round"/>
<rect x="391.00" y="142.00" width="16.20" height="4.00" rx="0" fill="#ff0000" stroke="none" stroke-width="0"/>
<path d="M415.08 137.22L417.60 139.78L420.12 137.22" fill="none" stroke="#3b3b3b" stroke-width="1.2" stroke-linecap="butt" stroke-linejoin="miter"/>
<path d="M422.90 175.40V168.90H429.40" fill="none" stroke="#444" stroke-width="1" /><path d="M424.90 170.90L429.90 175.90M430.10 172.00V176.10H426.00" fill="none" stroke="#444" stroke-width="1" />
<rect x="445.90" y="98.10" width="3.00" height="3.00" rx="0" fill="#1e8ad6" stroke="none" stroke-width="0"/><path d="M451.00 99.60L460.80 99.60" stroke="#444" stroke-width="1.1" stroke-linecap="butt" fill="none"/>
<path d="M492.20 99.60L502.00 99.60" stroke="#444" stroke-width="1.1" stroke-linecap="butt" fill="none"/>
<rect x="445.90" y="104.10" width="3.00" height="3.00" rx="0" fill="#1e8ad6" stroke="none" stroke-width="0"/><path d="M451.00 105.60L460.80 105.60" stroke="#444" stroke-width="1.1" stroke-linecap="butt" fill="none"/>
<path d="M492.20 105.60L502.00 105.60" stroke="#444" stroke-width="1.1" stroke-linecap="butt" fill="none"/>
<rect x="445.90" y="110.00" width="3.00" height="3.00" rx="0" fill="#1e8ad6" stroke="none" stroke-width="0"/><path d="M451.00 111.50L460.80 111.50" stroke="#444" stroke-width="1.1" stroke-linecap="butt" fill="none"/>
<path d="M492.20 111.50L502.00 111.50" stroke="#444" stroke-width="1.1" stroke-linecap="butt" fill="none"/>
<path d="M470.08 105.22L472.60 107.78L475.12 105.22" fill="none" stroke="#3b3b3b" stroke-width="1.2" stroke-linecap="butt" stroke-linejoin="miter"/>
<g font-family="Liberation Sans, sans-serif" font-weight="700" font-size="5.6" fill="#1e8ad6"><text x="486.9" y="101.6">1</text><text x="486.9" y="107.6">2</text><text x="486.9" y="113.6">3</text></g>
<path d="M510.88 105.22L513.40 107.78L515.92 105.22" fill="none" stroke="#3b3b3b" stroke-width="1.2" stroke-linecap="butt" stroke-linejoin="miter"/>
<g font-family="Liberation Sans, sans-serif" font-weight="700" font-size="5.6" fill="#1e8ad6"><text x="528" y="101.6">1</text><text x="530.8" y="107.6">a</text><text x="535.6" y="113.6">i</text></g>
<path d="M533.20 99.60L543.00 99.60" stroke="#444" stroke-width="1.1" stroke-linecap="butt" fill="none"/><path d="M536.20 105.60L543.00 105.60" stroke="#444" stroke-width="1.1" stroke-linecap="butt" fill="none"/><path d="M539.20 111.50L543.00 111.50" stroke="#444" stroke-width="1.1" stroke-linecap="butt" fill="none"/>
<path d="M550.08 105.22L552.60 107.78L555.12 105.22" fill="none" stroke="#3b3b3b" stroke-width="1.2" stroke-linecap="butt" stroke-linejoin="miter"/>
<path d="M566.40 94.20L566.40 117.80" stroke="#c8c6c4" stroke-width="1" stroke-linecap="butt" fill="none"/>
<path d="M574.00 99.50L588.00 99.50" stroke="#444" stroke-width="1.1" stroke-linecap="butt" fill="none"/><path d="M574.00 111.50L588.00 111.50" stroke="#444" stroke-width="1.1" stroke-linecap="butt" fill="none"/><path d="M582.40 103.50L588.00 103.50" stroke="#444" stroke-width="1.1" stroke-linecap="butt" fill="none"/><path d="M582.40 107.50L588.00 107.50" stroke="#444" stroke-width="1.1" stroke-linecap="butt" fill="none"/>
<path d="M580.2 105.5H574.4 M576.8 103L574.3 105.5L576.8 108" fill="none" stroke="#1e8ad6" stroke-width="1.2" stroke-linecap="round" stroke-linejoin="round"/>
<path d="M600.00 99.50L614.00 99.50" stroke="#444" stroke-width="1.1" stroke-linecap="butt" fill="none"/><path d="M600.00 111.50L614.00 111.50" stroke="#444" stroke-width="1.1" stroke-linecap="butt" fill="none"/><path d="M608.40 103.50L614.00 103.50" stroke="#444" stroke-width="1.1" stroke-linecap="butt" fill="none"/><path d="M608.40 107.50L614.00 107.50" stroke="#444" stroke-width="1.1" stroke-linecap="butt" fill="none"/>
<path d="M600.2 105.5H606 M603.6 103L606.1 105.5L603.6 108" fill="none" stroke="#1e8ad6" stroke-width="1.2" stroke-linecap="round" stroke-linejoin="round"/>
<path d="M621.40 94.20L621.40 117.80" stroke="#c8c6c4" stroke-width="1" stroke-linecap="butt" fill="none"/>
<path d="M628.5 104.6L631.5 98.9L634.5 104.6 M629.6 102.6H633.4" fill="none" stroke="#1e8ad6" stroke-width="1.3" stroke-linejoin="round" stroke-linecap="round"/>
<path d="M628.8 108H634.2L628.8 113.6H634.4" fill="none" stroke="#444" stroke-width="1.2" stroke-linejoin="round" stroke-linecap="round"/>
<path d="M640.6 98.6V113.4 M637.2 110L640.6 113.5L644 110" fill="none" stroke="#444" stroke-width="1.2" stroke-linecap="round" stroke-linejoin="round"/>
<path d="M650.40 94.20L650.40 117.80" stroke="#c8c6c4" stroke-width="1" stroke-linecap="butt" fill="none"/>
<rect x="653.70" y="94.70" width="22.60" height="22.60" rx="4" fill="#ebebeb" stroke="#767676" stroke-width="1"/>
<path d="M665.2 100.4H669.6 M665.2 100V111.2 M668.2 100V111.2" fill="none" stroke="#333" stroke-width="1.3" />
<path d="M665.4 100.2H664A3.1 3.1 0 0 0 664 106.4H665.4Z" fill="#333" stroke="#333" stroke-width="0.6" />
<rect x="442.60" y="126.70" width="22.60" height="22.60" rx="4" fill="#ebebeb" stroke="#767676" stroke-width="1"/>
<path d="M447.00 131.60L460.80 131.60" stroke="#444" stroke-width="1.1" stroke-linecap="butt" fill="none"/>
<path d="M473.20 131.60L487.00 131.60" stroke="#444" stroke-width="1.1" stroke-linecap="butt" fill="none"/>
<path d="M499.00 131.60L513.00 131.60" stroke="#444" stroke-width="1.1" stroke-linecap="butt" fill="none"/>
<path d="M525.00 131.60L539.00 131.60" stroke="#444" stroke-width="1.1" stroke-linecap="butt" fill="none"/>
<path d="M560.00 131.60L569.00 131.60" stroke="#444" stroke-width="1.1" stroke-linecap="butt" fill="none"/>
<path d="M447.00 135.60L456.80 135.60" stroke="#444" stroke-width="1.1" stroke-linecap="butt" fill="none"/>
<path d="M475.20 135.60L485.00 135.60" stroke="#444" stroke-width="1.1" stroke-linecap="butt" fill="none"/>
<path d="M503.20 135.60L513.00 135.60" stroke="#444" stroke-width="1.1" stroke-linecap="butt" fill="none"/>
<path d="M525.00 135.60L539.00 135.60" stroke="#444" stroke-width="1.1" stroke-linecap="butt" fill="none"/>
<path d="M560.00 135.60L569.00 135.60" stroke="#444" stroke-width="1.1" stroke-linecap="butt" fill="none"/>
<path d="M447.00 139.60L460.80 139.60" stroke="#444" stroke-width="1.1" stroke-linecap="butt" fill="none"/>
<path d="M473.20 139.60L487.00 139.60" stroke="#444" stroke-width="1.1" stroke-linecap="butt" fill="none"/>
<path d="M499.00 139.60L513.00 139.60" stroke="#444" stroke-width="1.1" stroke-linecap="butt" fill="none"/>
<path d="M525.00 139.60L539.00 139.60" stroke="#444" stroke-width="1.1" stroke-linecap="butt" fill="none"/>
<path d="M560.00 139.60L569.00 139.60" stroke="#444" stroke-width="1.1" stroke-linecap="butt" fill="none"/>
<path d="M447.00 143.60L456.80 143.60" stroke="#444" stroke-width="1.1" stroke-linecap="butt" fill="none"/>
<path d="M475.20 143.60L485.00 143.60" stroke="#444" stroke-width="1.1" stroke-linecap="butt" fill="none"/>
<path d="M503.20 143.60L513.00 143.60" stroke="#444" stroke-width="1.1" stroke-linecap="butt" fill="none"/>
<path d="M525.00 143.60L539.00 143.60" stroke="#444" stroke-width="1.1" stroke-linecap="butt" fill="none"/>
<path d="M560.00 143.60L569.00 143.60" stroke="#444" stroke-width="1.1" stroke-linecap="butt" fill="none"/>
<path d="M546.30 126.00L546.30 149.80" stroke="#c8c6c4" stroke-width="1" stroke-linecap="butt" fill="none"/>
<path d="M555.4 132V136.8 M553.2 134.2L555.4 131.9L557.6 134.2 M555.4 139.4V144.2 M553.2 142L555.4 144.3L557.6 142" fill="none" stroke="#1e8ad6" stroke-width="1.2" stroke-linecap="round" stroke-linejoin="round"/>
<path d="M574.98 137.22L577.50 139.78L580.02 137.22" fill="none" stroke="#3b3b3b" stroke-width="1.2" stroke-linecap="butt" stroke-linejoin="miter"/>
<path d="M591.40 126.00L591.40 149.80" stroke="#c8c6c4" stroke-width="1" stroke-linecap="butt" fill="none"/>
<path d="M601.2 136.4L606.6 131L611 135.4L605.6 140.8Z M606.6 131.4C605.4 129.6 607.6 128.8 608.6 131.2L608.8 133" fill="#fdfdfd" stroke="#444" stroke-width="1.1" stroke-linejoin="round"/>
<path d="M611.6 140C611 137.8 612 136.4 610.4 134.6C612.8 135.4 613.4 138 612.6 140Z" fill="#1b6ec8" stroke="#1b6ec8" stroke-width="0.6" />
<rect x="598.60" y="143.00" width="14.80" height="2.80" rx="0" fill="#fff" stroke="#9a9a9a" stroke-width="1"/>
<path d="M621.88 137.22L624.40 139.78L626.92 137.22" fill="none" stroke="#3b3b3b" stroke-width="1.2" stroke-linecap="butt" stroke-linejoin="miter"/>
<path d="M639.4 130.4H654 M639.4 137.2H654 M639.4 130.4V144 M646.7 130.4V144 M654 130.4V144" fill="none" stroke="#444" stroke-width="1" stroke-dasharray="1 1.35"/>
<path d="M639.00 144.40L654.40 144.40" stroke="#222" stroke-width="1.6" stroke-linecap="butt" fill="none"/>
<path d="M663.08 137.22L665.60 139.78L668.12 137.22" fill="none" stroke="#3b3b3b" stroke-width="1.2" stroke-linecap="butt" stroke-linejoin="miter"/>
<path d="M673.90 175.40V168.90H680.40" fill="none" stroke="#444" stroke-width="1" /><path d="M675.90 170.90L680.90 175.90M681.10 172.00V176.10H677.00" fill="none" stroke="#444" stroke-width="1" />
<rect x="695.20" y="94.80" width="340.00" height="58.80" rx="3" fill="#fdfdfd" stroke="#d0cfce" stroke-width="1"/>
<path d="M1021.60 95.00L1021.60 153.40" stroke="#d0cfce" stroke-width="1" stroke-linecap="butt" fill="none"/>
<path d="M1022.00 114.80L1035.00 114.80" stroke="#d8d7d6" stroke-width="1.6" stroke-linecap="butt" fill="none"/><path d="M1022.00 133.80L1035.00 133.80" stroke="#d8d7d6" stroke-width="1.6" stroke-linecap="butt" fill="none"/>
<rect x="696.60" y="96.80" width="106.60" height="55.00" rx="0" fill="#fdfdfd" stroke="#5e5e5e" stroke-width="1.2"/>
<rect x="698.20" y="98.40" width="103.40" height="51.80" rx="0" fill="none" stroke="#dcdcdc" stroke-width="1.4"/>
<path d="M1026.08 102.52L1028.60 105.08L1031.12 102.52" fill="none" transform="rotate(180 1028.6 103.8)" stroke="#bdbdbd" stroke-width="1.2" stroke-linecap="butt" stroke-linejoin="miter"/>
<path d="M1026.08 123.12L1028.60 125.68L1031.12 123.12" fill="none" stroke="#3b3b3b" stroke-width="1.2" stroke-linecap="butt" stroke-linejoin="miter"/>
<path d="M1025.40 140.40L1031.80 140.40" stroke="#3b3b3b" stroke-width="1.1" stroke-linecap="butt" fill="none"/><path d="M1026.08 143.32L1028.60 145.88L1031.12 143.32" fill="none" stroke="#3b3b3b" stroke-width="1.2" stroke-linecap="butt" stroke-linejoin="miter"/>
<path d="M1035.70 175.40V168.90H1042.20" fill="none" stroke="#444" stroke-width="1" /><path d="M1037.70 170.90L1042.70 175.90M1042.90 172.00V176.10H1038.80" fill="none" stroke="#444" stroke-width="1" />
<circle cx="1069.50" cy="95.50" r="4.90" fill="#f4f4f7" stroke="#444" stroke-width="1.2"/><path d="M1065.80 99.20L1059.90 105.20" stroke="#444" stroke-width="1.3" stroke-linecap="round" fill="none"/>
<path d="M1131.08 97.32L1133.60 99.88L1136.12 97.32" fill="none" stroke="#3b3b3b" stroke-width="1.2" stroke-linecap="butt" stroke-linejoin="miter"/>
<g font-family="Liberation Sans, sans-serif" font-size="10.5"><text x="1064.6" y="123.3" fill="#b146c2">b</text><text x="1068.4" y="131.8" fill="#1e8ad6">c</text></g>
<path d="M1062 119.4C1059 120.6 1058.4 124.6 1061 126.6 M1060.6 129.2H1066.4 M1064 126.8L1066.5 129.2L1064 131.6" fill="none" stroke="#1e8ad6" stroke-width="1.2" stroke-linecap="round" stroke-linejoin="round"/>
<path d="M1061.6 143.6V155.4L1064.6 152.6L1066.6 157L1068.4 156.2L1066.4 151.9H1070.6Z" fill="#fdfdfd" stroke="#333" stroke-width="1.1" stroke-linejoin="round"/>
<path d="M1136.08 149.22L1138.60 151.78L1141.12 149.22" fill="none" stroke="#3b3b3b" stroke-width="1.2" stroke-linecap="butt" stroke-linejoin="miter"/>
<rect x="1175.70" y="91.70" width="26.80" height="26.60" rx="0" fill="none" stroke="#d83b01" stroke-width="1.1"/>
<rect x="1178.70" y="94.60" width="8.60" height="8.60" rx="0" fill="none" stroke="#d83b01" stroke-width="1.1"/>
<rect x="1178.70" y="106.60" width="8.60" height="8.60" rx="0" fill="none" stroke="#d83b01" stroke-width="1.1"/>
<rect x="1190.80" y="94.60" width="8.60" height="8.60" rx="0" fill="none" stroke="#d83b01" stroke-width="1.1"/>
<rect x="1190.80" y="106.60" width="8.60" height="8.60" rx="0" fill="none" stroke="#d83b01" stroke-width="1.1"/>
<path d="M1282.75 166.84L1286.80 170.76L1290.85 166.84" fill="none" stroke="#333" stroke-width="1.3" stroke-linecap="butt" stroke-linejoin="miter"/>
<path d="M121.60 88.00L121.60 175.50" stroke="#d0cecd" stroke-width="1" stroke-linecap="butt" fill="none"/>
<path d="M433.50 88.00L433.50 175.50" stroke="#d0cecd" stroke-width="1" stroke-linecap="butt" fill="none"/>
<path d="M684.60 88.00L684.60 175.50" stroke="#d0cecd" stroke-width="1" stroke-linecap="butt" fill="none"/>
<path d="M1046.40 88.00L1046.40 175.50" stroke="#d0cecd" stroke-width="1" stroke-linecap="butt" fill="none"/>
<path d="M1159.70 88.00L1159.70 175.50" stroke="#d0cecd" stroke-width="1" stroke-linecap="butt" fill="none"/>
<path d="M1217.70 88.00L1217.70 175.50" stroke="#d0cecd" stroke-width="1" stroke-linecap="butt" fill="none"/>
<path d="M176.8 936.2H172.8V925.8H178.5V932.6 M178.5 925.8H184.4V931.2" fill="none" stroke="#1f1f1f" stroke-width="1.1" stroke-linejoin="miter"/>
<path d="M177.4 934.4L180.4 937.4L185.8 932.2" fill="none" stroke="#1f1f1f" stroke-width="1.1" />
<path d="M448 936.2H440.6V925.7H453.2V928.6 M440.6 927.8H453.2 M442.4 930.3H445 M442.4 932.8H444.2" fill="none" stroke="#1f1f1f" stroke-width="1.1" />
<circle cx="449.30" cy="933.30" r="3.70" fill="#f3f2f1" stroke="#1f1f1f" stroke-width="1.1"/><circle cx="449.30" cy="933.30" r="1.50" fill="#1f1f1f" stroke="none" stroke-width="0"/>
<circle cx="478.00" cy="926.20" r="1.70" fill="none" stroke="#1f1f1f" stroke-width="1.1"/>
<path d="M472.6 928.2C473.6 927 474.6 927.4 475.6 928.6C476.6 929.8 479.4 929.8 480.4 928.6C481.4 927.4 482.6 927 483.4 928.2 M475.8 929.2V935C475.8 937.4 474 937.8 473.4 936.6 M480.2 929.2V932.4" fill="none" stroke="#1f1f1f" stroke-width="1.1" stroke-linecap="round"/>
<path d="M478.4 934.4L481.2 937.4L486.4 932" fill="none" stroke="#1f1f1f" stroke-width="1.1" />
<path d="M938.4 927V924.6H941 M949.4 924.6H952V927 M952 934.6V937H949.4 M941 937H938.4V934.6" fill="none" stroke="#1f1f1f" stroke-width="1.1" />
<path d="M942.2 926.6H946L948.2 928.8V935.2H942.2Z M946 926.6V928.8H948.2" fill="none" stroke="#1f1f1f" stroke-width="1" />
<path d="M1017.4 925.8C1015.6 924.4 1013.4 924.4 1011.6 924.8V935.2C1013.4 934.8 1015.6 934.8 1017.4 936.2C1019.2 934.8 1021.4 934.8 1023.2 935.2V924.8C1021.4 924.4 1019.2 924.4 1017.4 925.8Z M1017.4 925.8V936.2" fill="none" stroke="#1f1f1f" stroke-width="1.1" stroke-linejoin="round"/>
<path d="M1013.00 927.80L1016.00 927.80" stroke="#1f1f1f" stroke-width="0.9" stroke-linecap="butt" fill="none"/><path d="M1018.80 927.80L1021.80 927.80" stroke="#1f1f1f" stroke-width="0.9" stroke-linecap="butt" fill="none"/>
<path d="M1013.00 930.00L1016.00 930.00" stroke="#1f1f1f" stroke-width="0.9" stroke-linecap="butt" fill="none"/><path d="M1018.80 930.00L1021.80 930.00" stroke="#1f1f1f" stroke-width="0.9" stroke-linecap="butt" fill="none"/>
<path d="M1013.00 932.20L1016.00 932.20" stroke="#1f1f1f" stroke-width="0.9" stroke-linecap="butt" fill="none"/><path d="M1018.80 932.20L1021.80 932.20" stroke="#1f1f1f" stroke-width="0.9" stroke-linecap="butt" fill="none"/>
<rect x="1052.90" y="924.60" width="9.60" height="12.60" rx="0" fill="none" stroke="#1f1f1f" stroke-width="1.1"/>
<path d="M1054.80 927.40L1060.60 927.40" stroke="#1f1f1f" stroke-width="1" stroke-linecap="butt" fill="none"/>
<path d="M1054.80 929.80L1060.60 929.80" stroke="#1f1f1f" stroke-width="1" stroke-linecap="butt" fill="none"/>
<path d="M1054.80 932.20L1060.60 932.20" stroke="#1f1f1f" stroke-width="1" stroke-linecap="butt" fill="none"/>
<path d="M1054.80 934.60L1060.60 934.60" stroke="#1f1f1f" stroke-width="1" stroke-linecap="butt" fill="none"/>
<path d="M1097 936H1091.8V924.6H1102.6V928.4" fill="none" stroke="#1f1f1f" stroke-width="1.1" />
<path d="M1093.60 927.00L1100.80 927.00" stroke="#1f1f1f" stroke-width="0.9" stroke-linecap="butt" fill="none"/>
<path d="M1093.60 929.40L1098.40 929.40" stroke="#1f1f1f" stroke-width="0.9" stroke-linecap="butt" fill="none"/>
<path d="M1093.60 931.80L1098.40 931.80" stroke="#1f1f1f" stroke-width="0.9" stroke-linecap="butt" fill="none"/>
<circle cx="1100.80" cy="933.20" r="3.60" fill="#f3f2f1" stroke="#1f1f1f" stroke-width="1.1"/><path d="M1097.2 933.2H1104.4 M1100.8 929.6C1099 931.4 1099 935 1100.8 936.8C1102.6 935 1102.6 931.4 1100.8 929.6" fill="none" stroke="#1f1f1f" stroke-width="0.8" />
<path d="M1124.60 931.50L1131.80 931.50" stroke="#1f1f1f" stroke-width="1.1" stroke-linecap="butt" fill="none"/>
<path d="M1137.00 931.50L1236.60 931.50" stroke="#7a7a7a" stroke-width="1" stroke-linecap="butt" fill="none"/>
<path d="M1188.00 927.60L1188.00 935.40" stroke="#7a7a7a" stroke-width="1" stroke-linecap="butt" fill="none"/>
<rect x="1190.60" y="925.00" width="5.20" height="13.00" rx="0" fill="#595959" stroke="none" stroke-width="0"/>
<path d="M1241.8 931.5H1249.6 M1245.7 927.6V935.4" fill="none" stroke="#1f1f1f" stroke-width="1.1" />
</svg>
<span class="t" style="left:52.00px;top:19.00px;font-size:12.6px;color:#ffffff;letter-spacing:-0.300px;transform:scaleX(0.9859);-webkit-text-stroke:0.25px #fff;">Automatisches Speichern</span>
<span class="t" style="left:497.50px;top:19.00px;font-size:12.6px;color:#ffffff;letter-spacing:-0.300px;transform:scaleX(0.9927);white-space:pre;-webkit-text-stroke:0.25px #fff;">Dokument2  -...</span>
<span class="t" style="left:675.50px;top:19.00px;font-size:12.6px;color:#2a4b8d;letter-spacing:-0.300px;transform:scaleX(0.9775);">Suchen</span>
<span class="t" style="left:1008.50px;top:19.00px;font-size:12.6px;color:#ffffff;letter-spacing:-0.300px;transform:scaleX(0.9789);-webkit-text-stroke:0.25px #fff;">Daniel Hofer</span>
<span class="t" style="left:20.00px;top:58.00px;font-size:12.6px;color:#1c1c1c;letter-spacing:0.119px;">Datei</span>
<span class="t" style="left:71.50px;top:58.00px;font-size:12.6px;color:#1c1c1c;letter-spacing:0.378px;-webkit-text-stroke:0.3px #1c1c1c;">Start</span>
<span class="t" style="left:120.00px;top:58.00px;font-size:12.6px;color:#1c1c1c;letter-spacing:0.035px;">Einfügen</span>
<span class="t" style="left:193.00px;top:58.00px;font-size:12.6px;color:#1c1c1c;letter-spacing:-0.102px;">Zeichnen</span>
<span class="t" style="left:267.50px;top:58.00px;font-size:12.6px;color:#1c1c1c;letter-spacing:0.042px;">Entwurf</span>
<span class="t" style="left:332.00px;top:58.00px;font-size:12.6px;color:#1c1c1c;letter-spacing:0.031px;">Layout</span>
<span class="t" style="left:392.50px;top:58.00px;font-size:12.6px;color:#1c1c1c;letter-spacing:-0.061px;">Referenzen</span>
<span class="t" style="left:479.00px;top:58.00px;font-size:12.6px;color:#1c1c1c;letter-spacing:0.062px;">Sendungen</span>
<span class="t" style="left:566.50px;top:58.00px;font-size:12.6px;color:#1c1c1c;letter-spacing:0.348px;">Überprüfen</span>
<span class="t" style="left:655.00px;top:58.00px;font-size:12.6px;color:#1c1c1c;letter-spacing:0.027px;">Ansicht</span>
<span class="t" style="left:719.00px;top:58.00px;font-size:12.6px;color:#1c1c1c;letter-spacing:0.133px;">Entwicklertools</span>
<span class="t" style="left:828.00px;top:58.00px;font-size:12.6px;color:#1c1c1c;letter-spacing:0.432px;">Zotero</span>
<span class="t" style="left:887.00px;top:58.00px;font-size:12.6px;color:#1c1c1c;letter-spacing:0.159px;">Hilfe</span>
<span class="t" style="left:976.00px;top:58.00px;font-size:12.6px;color:#1e1e1e;letter-spacing:0.289px;">Kommentare</span>
<span class="t" style="left:1092.00px;top:58.00px;font-size:12.6px;color:#1e1e1e;letter-spacing:0.325px;">Bearbeitung</span>
<span class="t" style="left:1216.50px;top:58.00px;font-size:12.6px;color:#ffffff;letter-spacing:0.031px;-webkit-text-stroke:0.2px #fff;">Freigeben</span>
<span class="t" style="left:32.50px;top:123.00px;font-size:12.6px;color:#1e1e1e;letter-spacing:-0.300px;transform:scaleX(0.9721);">Einfügen</span>
<span class="t" style="left:19.00px;top:162.00px;font-size:11.8px;color:#3b3b3b;letter-spacing:-0.233px;">Zwischenablage</span>
<span class="t" style="left:246.00px;top:162.00px;font-size:11.8px;color:#3b3b3b;letter-spacing:-0.070px;">Schriftart</span>
<span class="t" style="left:534.50px;top:162.00px;font-size:11.8px;color:#3b3b3b;letter-spacing:-0.300px;transform:scaleX(0.9773);">Absatz</span>
<span class="t" style="left:817.50px;top:162.00px;font-size:11.8px;color:#3b3b3b;letter-spacing:-0.188px;">Formatvorlagen</span>
<span class="t" style="left:1077.00px;top:162.00px;font-size:11.8px;color:#3b3b3b;letter-spacing:-0.300px;transform:scaleX(0.9896);">Bearbeiten</span>
<span class="t" style="left:1169.00px;top:162.00px;font-size:11.8px;color:#3b3b3b;letter-spacing:-0.165px;">Add-Ins</span>
<span class="t" style="left:134.00px;top:96.00px;font-size:12.6px;color:#1e1e1e;letter-spacing:-0.166px;clip-path:inset(0 5.5px 0 0);">Calibri (Textkörpe</span>
<span class="t" style="left:241.60px;top:96.00px;font-size:12.6px;color:#1e1e1e;letter-spacing:0.361px;">11</span>
<span class="t" style="left:722.50px;top:115.00px;font-size:13.2px;color:#111;letter-spacing:0.059px;-webkit-text-stroke:0.15px #111;">Standard</span>
<span class="t" style="left:813.50px;top:115.00px;font-size:13.2px;color:#111;letter-spacing:0.231px;-webkit-text-stroke:0.15px #111;">Kein Leerraum</span>
<span class="t" style="left:919.00px;top:114.00px;font-size:21px;color:#6482c0;letter-spacing:-0.300px;transform:scaleX(0.9417);">Überschrift</span>
<span class="t" style="left:1079.50px;top:89.00px;font-size:12.6px;color:#1e1e1e;letter-spacing:-0.300px;transform:scaleX(0.9409);">Suchen</span>
<span class="t" style="left:1079.50px;top:115.00px;font-size:12.6px;color:#1e1e1e;letter-spacing:-0.300px;transform:scaleX(0.8879);">Ersetzen</span>
<span class="t" style="left:1079.50px;top:141.00px;font-size:12.6px;color:#1e1e1e;letter-spacing:-0.300px;transform:scaleX(0.9756);">Markieren</span>
<span class="t" style="left:1175.50px;top:122.00px;font-size:12.6px;color:#1e1e1e;letter-spacing:-0.152px;">Add-</span>
<span class="t" style="left:1181.50px;top:138.00px;font-size:12.6px;color:#1e1e1e;letter-spacing:-0.300px;transform:scaleX(0.9112);">Ins</span>
<span class="t" style="left:138.01px;top:128.00px;font-size:13.4px;color:#333;letter-spacing:0.000px;font-weight:700;">F</span>
<span class="t" style="left:163.23px;top:128.00px;font-size:13.4px;color:#444;letter-spacing:0.000px;font-style:italic;">K</span>
<span class="t" style="left:188.76px;top:128.00px;font-size:13.4px;color:#444;letter-spacing:0.000px;">U</span>
<span class="t" style="left:228.20px;top:128.00px;font-size:12.2px;color:#777;letter-spacing:-0.081px;">ab</span>
<span class="t" style="left:257.24px;top:128.00px;font-size:12.8px;color:#333;letter-spacing:0.000px;font-weight:700;">x</span>
<span class="t" style="left:264.54px;top:134.00px;font-size:7.4px;color:#1e8ad6;letter-spacing:0.000px;font-weight:700;">2</span>
<span class="t" style="left:283.29px;top:128.00px;font-size:12.8px;color:#333;letter-spacing:0.000px;font-weight:700;">x</span>
<span class="t" style="left:290.54px;top:123.00px;font-size:7.4px;color:#1e8ad6;letter-spacing:0.000px;font-weight:700;">2</span>
<span class="t" style="left:12.50px;top:922.00px;font-size:11.6px;color:#2a2a2a;letter-spacing:-0.284px;">Seite 1 von 1</span>
<span class="t" style="left:96.50px;top:922.00px;font-size:11.6px;color:#2a2a2a;letter-spacing:-0.036px;">140 Wörter</span>
<span class="t" style="left:203.50px;top:922.00px;font-size:11.6px;color:#2a2a2a;letter-spacing:-0.274px;">Deutsch (Schweiz)</span>
<span class="t" style="left:314.50px;top:922.00px;font-size:11.6px;color:#2a2a2a;letter-spacing:-0.107px;">Textvorhersagen: ein</span>
<span class="t" style="left:489.50px;top:922.00px;font-size:11.6px;color:#2a2a2a;letter-spacing:-0.140px;">Barrierefreiheit: Keine Probleme</span>
<span class="t" style="left:956.00px;top:922.00px;font-size:11.6px;color:#2a2a2a;letter-spacing:-0.300px;transform:scaleX(0.9808);">Fokus</span>
<span class="t" style="left:1264.50px;top:922.00px;font-size:11.6px;color:#2a2a2a;letter-spacing:-0.300px;transform:scaleX(0.8961);">150%</span>
<span class="d" style="left:207.0px;top:373px;letter-spacing:0.04px">Video·</span>
<span class="d" style="left:263.3px;top:373px;letter-spacing:0.52px">bietet·</span>
<span class="d" style="left:321.1px;top:373px;letter-spacing:-0.03px">eine·</span>
<span class="d" style="left:364.3px;top:373px;letter-spacing:0.11px">leistungsstarke·</span>
<span class="d" style="left:502.6px;top:373px;letter-spacing:0.44px">Möglichkeit·</span>
<span class="d" style="left:612.0px;top:373px;letter-spacing:-0.23px">zur·</span>
<span class="d" style="left:644.7px;top:373px;letter-spacing:0.35px">Unterstützung·</span>
<span class="d" style="left:777.5px;top:373px;letter-spacing:-0.15px">Ihres·</span>
<span class="d" style="left:826.5px;top:373px;letter-spacing:0.09px">Standpunkts.·</span>
<span class="d" style="left:948.1px;top:373px;letter-spacing:0.23px">Wenn·</span>
<span class="d" style="left:1006.3px;top:373px;letter-spacing:-0.90px;transform:scaleX(0.9934)">Sie·</span>
<span class="d" style="left:1037.2px;top:373px;letter-spacing:-0.01px">auf·</span>
<span class="d" style="left:207.0px;top:402px;letter-spacing:0.47px">"Onlinevideo"·</span>
<span class="d" style="left:336.9px;top:402px;letter-spacing:0.06px">klicken,·</span>
<span class="d" style="left:409.0px;top:402px;letter-spacing:0.21px">können·</span>
<span class="d" style="left:480.9px;top:402px;letter-spacing:-0.90px;transform:scaleX(0.9957)">Sie·</span>
<span class="d" style="left:511.9px;top:402px;letter-spacing:-0.04px">den·</span>
<span class="d" style="left:550.7px;top:402px;letter-spacing:0.17px">Einbettungscode·</span>
<span class="d" style="left:705.2px;top:402px;letter-spacing:0.39px">für·</span>
<span class="d" style="left:736.0px;top:402px;letter-spacing:-0.60px">das·</span>
<span class="d" style="left:771.5px;top:402px;letter-spacing:0.06px">Video·</span>
<span class="d" style="left:827.9px;top:402px;letter-spacing:0.21px">einfügen,·</span>
<span class="d" style="left:916.7px;top:402px;letter-spacing:-0.60px">das·</span>
<span class="d" style="left:952.2px;top:402px;letter-spacing:0.24px">hinzugefügt·</span>
<span class="d" style="left:207.0px;top:431px;letter-spacing:0.40px">werden·</span>
<span class="d" style="left:280.2px;top:431px;letter-spacing:-0.07px">soll.·</span>
<span class="d" style="left:321.0px;top:431px;letter-spacing:-0.90px">Sie·</span>
<span class="d" style="left:352.0px;top:431px;letter-spacing:0.22px">können·</span>
<span class="d" style="left:424.0px;top:431px;letter-spacing:-0.19px">auch·</span>
<span class="d" style="left:471.8px;top:431px;letter-spacing:-0.02px">ein·</span>
<span class="d" style="left:504.3px;top:431px;letter-spacing:0.38px">Stichwort·</span>
<span class="d" style="left:594.8px;top:431px;letter-spacing:0.10px">eingeben,·</span>
<span class="d" style="left:688.0px;top:431px;letter-spacing:0.15px">um·</span>
<span class="d" style="left:722.0px;top:431px;letter-spacing:0.29px">online·</span>
<span class="d" style="left:782.6px;top:431px;letter-spacing:-0.19px">nach·</span>
<span class="d" style="left:830.5px;top:431px;letter-spacing:0.13px">dem·</span>
<span class="d" style="left:875.4px;top:431px;letter-spacing:0.21px">Videoclip·</span>
<span class="d" style="left:962.8px;top:431px;letter-spacing:-0.64px">zu·</span>
<span class="d" style="left:988.0px;top:431px;letter-spacing:-0.12px">suchen,·</span>
<span class="d" style="left:1061.8px;top:431px;letter-spacing:0.10px">der·</span>
<span class="d" style="left:207.0px;top:460px;letter-spacing:0.54px">optimal·</span>
<span class="d" style="left:280.7px;top:460px;letter-spacing:-0.63px">zu·</span>
<span class="d" style="left:305.9px;top:460px;letter-spacing:0.32px">Ihrem·</span>
<span class="d" style="left:364.1px;top:460px;letter-spacing:0.41px">Dokument·</span>
<span class="d" style="left:463.2px;top:460px;letter-spacing:0.16px">passt.¶</span>
<span class="d" style="left:207.0px;top:505px;letter-spacing:0.21px">Damit·</span>
<span class="d" style="left:265.7px;top:505px;letter-spacing:0.08px">Ihr·</span>
<span class="d" style="left:295.3px;top:505px;letter-spacing:0.35px">Dokument·</span>
<span class="d" style="left:393.8px;top:505px;letter-spacing:-0.05px">ein·</span>
<span class="d" style="left:426.2px;top:505px;letter-spacing:0.13px">professionelles·</span>
<span class="d" style="left:564.8px;top:505px;letter-spacing:-0.25px">Aussehen·</span>
<span class="d" style="left:655.8px;top:505px;letter-spacing:0.32px">erhält,·</span>
<span class="d" style="left:719.0px;top:505px;letter-spacing:0.35px">stellt·</span>
<span class="d" style="left:768.1px;top:505px;letter-spacing:0.46px">Word·</span>
<span class="d" style="left:823.1px;top:505px;letter-spacing:0.21px">einander·</span>
<span class="d" style="left:907.5px;top:505px;letter-spacing:-0.04px">ergänzende·</span>
<span class="d" style="left:1016.6px;top:505px;letter-spacing:-0.47px">Designs·</span>
<span class="d" style="left:207.0px;top:534px;letter-spacing:0.33px">für·</span>
<span class="d" style="left:237.6px;top:534px;letter-spacing:-0.06px">Kopfzeile,·</span>
<span class="d" style="left:329.0px;top:534px;letter-spacing:-0.32px">Fußzeile,·</span>
<span class="d" style="left:412.5px;top:534px;letter-spacing:0.19px">Deckblatt·</span>
<span class="d" style="left:502.2px;top:534px;letter-spacing:0.05px">und·</span>
<span class="d" style="left:541.4px;top:534px;letter-spacing:0.39px">Textfelder·</span>
<span class="d" style="left:636.8px;top:534px;letter-spacing:-0.26px">zur·</span>
<span class="d" style="left:669.3px;top:534px;letter-spacing:0.16px">Verfügung.·</span>
<span class="d" style="left:771.9px;top:534px;letter-spacing:-0.12px">Beispielsweise·</span>
<span class="d" style="left:904.5px;top:534px;letter-spacing:0.14px">können·</span>
<span class="d" style="left:975.9px;top:534px;letter-spacing:-0.90px;transform:scaleX(0.9889)">Sie·</span>
<span class="d" style="left:1006.7px;top:534px;letter-spacing:-0.09px">ein·</span>
<span class="d" style="left:207.0px;top:563px;letter-spacing:-0.34px">passendes·</span>
<span class="d" style="left:304.4px;top:563px;letter-spacing:0.24px">Deckblatt·</span>
<span class="d" style="left:394.7px;top:563px;letter-spacing:0.58px">mit·</span>
<span class="d" style="left:429.5px;top:563px;letter-spacing:-0.02px">Kopfzeile·</span>
<span class="d" style="left:516.0px;top:563px;letter-spacing:0.11px">und·</span>
<span class="d" style="left:555.5px;top:563px;letter-spacing:-0.05px">Randleiste·</span>
<span class="d" style="left:653.6px;top:563px;letter-spacing:0.19px">hinzufügen.·</span>
<span class="d" style="left:763.1px;top:563px;letter-spacing:-0.17px">Klicken·</span>
<span class="d" style="left:831.1px;top:563px;letter-spacing:-0.90px;transform:scaleX(0.9950)">Sie·</span>
<span class="d" style="left:862.1px;top:563px;letter-spacing:0.00px">auf·</span>
<span class="d" style="left:895.7px;top:563px;letter-spacing:0.28px">"Einfügen",·</span>
<span class="d" style="left:1001.8px;top:563px;letter-spacing:0.11px">und·</span>
<span class="d" style="left:1041.3px;top:563px;letter-spacing:0.25px">wählen·</span>
<span class="d" style="left:207.0px;top:592px;letter-spacing:-0.90px">Sie·</span>
<span class="d" style="left:238.0px;top:592px;letter-spacing:0.03px">dann·</span>
<span class="d" style="left:288.0px;top:592px;letter-spacing:-0.03px">die·</span>
<span class="d" style="left:320.4px;top:592px;letter-spacing:0.22px">gewünschten·</span>
<span class="d" style="left:444.5px;top:592px;letter-spacing:0.10px">Elemente·</span>
<span class="d" style="left:534.3px;top:592px;letter-spacing:-0.59px">aus·</span>
<span class="d" style="left:569.8px;top:592px;letter-spacing:-0.03px">den·</span>
<span class="d" style="left:608.8px;top:592px;letter-spacing:0.13px">verschiedenen·</span>
<span class="d" style="left:743.9px;top:592px;letter-spacing:-0.03px">Katalogen·</span>
<span class="d" style="left:837.9px;top:592px;letter-spacing:0.03px">aus.¶</span>
<span class="d" style="left:207.0px;top:637px;letter-spacing:-0.45px">Designs·</span>
<span class="d" style="left:280.4px;top:637px;letter-spacing:0.12px">und·</span>
<span class="d" style="left:319.9px;top:637px;letter-spacing:0.26px">Formatvorlagen·</span>
<span class="d" style="left:466.8px;top:637px;letter-spacing:0.27px">helfen·</span>
<span class="d" style="left:528.3px;top:637px;letter-spacing:-0.21px">auch·</span>
<span class="d" style="left:576.1px;top:637px;letter-spacing:0.04px">dabei,·</span>
<span class="d" style="left:636.0px;top:637px;letter-spacing:-0.03px">die·</span>
<span class="d" style="left:668.4px;top:637px;letter-spacing:0.10px">Elemente·</span>
<span class="d" style="left:758.1px;top:637px;letter-spacing:-0.12px">Ihres·</span>
<span class="d" style="left:807.3px;top:637px;letter-spacing:0.22px">Dokuments·</span>
<span class="d" style="left:914.6px;top:637px;letter-spacing:0.31px">aufeinander·</span>
<span class="d" style="left:207.0px;top:666px;letter-spacing:0.26px">abzustimmen.·</span>
<span class="d" style="left:338.2px;top:666px;letter-spacing:0.28px">Wenn·</span>
<span class="d" style="left:396.7px;top:666px;letter-spacing:-0.90px">Sie·</span>
<span class="d" style="left:427.7px;top:666px;letter-spacing:0.02px">auf·</span>
<span class="d" style="left:461.4px;top:666px;letter-spacing:0.73px">"Entwurf"·</span>
<span class="d" style="left:555.2px;top:666px;letter-spacing:0.08px">klicken·</span>
<span class="d" style="left:621.9px;top:666px;letter-spacing:0.13px">und·</span>
<span class="d" style="left:661.4px;top:666px;letter-spacing:-0.02px">ein·</span>
<span class="d" style="left:693.9px;top:666px;letter-spacing:-0.20px">neues·</span>
<span class="d" style="left:752.3px;top:666px;letter-spacing:-0.33px">Design·</span>
<span class="d" style="left:817.2px;top:666px;letter-spacing:0.10px">auswählen,·</span>
<span class="d" style="left:923.5px;top:666px;letter-spacing:0.20px">ändern·</span>
<span class="d" style="left:992.1px;top:666px;letter-spacing:-0.36px">sich·</span>
<span class="d" style="left:1031.5px;top:666px;letter-spacing:-0.02px">die·</span>
<span class="d" style="left:207.0px;top:695px;letter-spacing:0.08px">Grafiken,·</span>
<span class="d" style="left:293.4px;top:695px;letter-spacing:0.10px">Diagramme·</span>
<span class="d" style="left:401.7px;top:695px;letter-spacing:0.11px">und·</span>
<span class="d" style="left:441.2px;top:695px;letter-spacing:0.26px">SmartArt-Grafiken·</span>
<span class="d" style="left:609.6px;top:695px;letter-spacing:-0.49px">so,·</span>
<span class="d" style="left:640.1px;top:695px;letter-spacing:-0.72px">dass·</span>
<span class="d" style="left:684.2px;top:695px;letter-spacing:-0.49px">sie·</span>
<span class="d" style="left:713.7px;top:695px;letter-spacing:0.11px">dem·</span>
<span class="d" style="left:758.5px;top:695px;letter-spacing:0.09px">neuen·</span>
<span class="d" style="left:819.8px;top:695px;letter-spacing:-0.35px">Design·</span>
<span class="d" style="left:884.5px;top:695px;letter-spacing:0.21px">entsprechen.·</span>
<span class="d" style="left:1006.6px;top:695px;letter-spacing:0.25px">Wenn·</span>
<span class="d" style="left:1064.9px;top:695px;letter-spacing:-0.90px;transform:scaleX(0.9954)">Sie·</span>
<span class="d" style="left:207.0px;top:724px;letter-spacing:0.27px">Formatvorlagen·</span>
<span class="d" style="left:354.1px;top:724px;letter-spacing:0.26px">anwenden,·</span>
<span class="d" style="left:458.6px;top:724px;letter-spacing:0.20px">ändern·</span>
<span class="d" style="left:527.2px;top:724px;letter-spacing:-0.36px">sich·</span>
<span class="d" style="left:566.6px;top:724px;letter-spacing:-0.02px">die·</span>
<span class="d" style="left:599.0px;top:724px;letter-spacing:0.37px">Überschriften·</span>
<span class="d" style="left:726.7px;top:724px;letter-spacing:-0.26px">passend·</span>
<span class="d" style="left:804.8px;top:724px;letter-spacing:-0.17px">zum·</span>
<span class="d" style="left:847.5px;top:724px;letter-spacing:0.11px">neuen·</span>
<span class="d" style="left:908.8px;top:724px;letter-spacing:0.02px">Design.¶</span>
<span class="d" style="left:208.0px;top:768px;letter-spacing:0.00px">¶</span>
<div class="abs" id="caret"></div>
<svg class="i" style="left:310px;top:350px" width="34" height="50" viewBox="310 350 34 50"><path d="M318.6 356.2H325.2C326.2 356.2 327 356.7 327 357.6C327 356.7 327.8 356.2 328.8 356.2H335.4V359.4H329V390.2H334.8V393H328.8C327.8 393 327 392.5 327 391.6C327 392.5 326.2 393 325.2 393H318.8V390.2H325V359.4H318.6Z" fill="#fff" stroke="#0c0c0c" stroke-width="2" stroke-linejoin="round"/></svg>
</div>
</body></html>
